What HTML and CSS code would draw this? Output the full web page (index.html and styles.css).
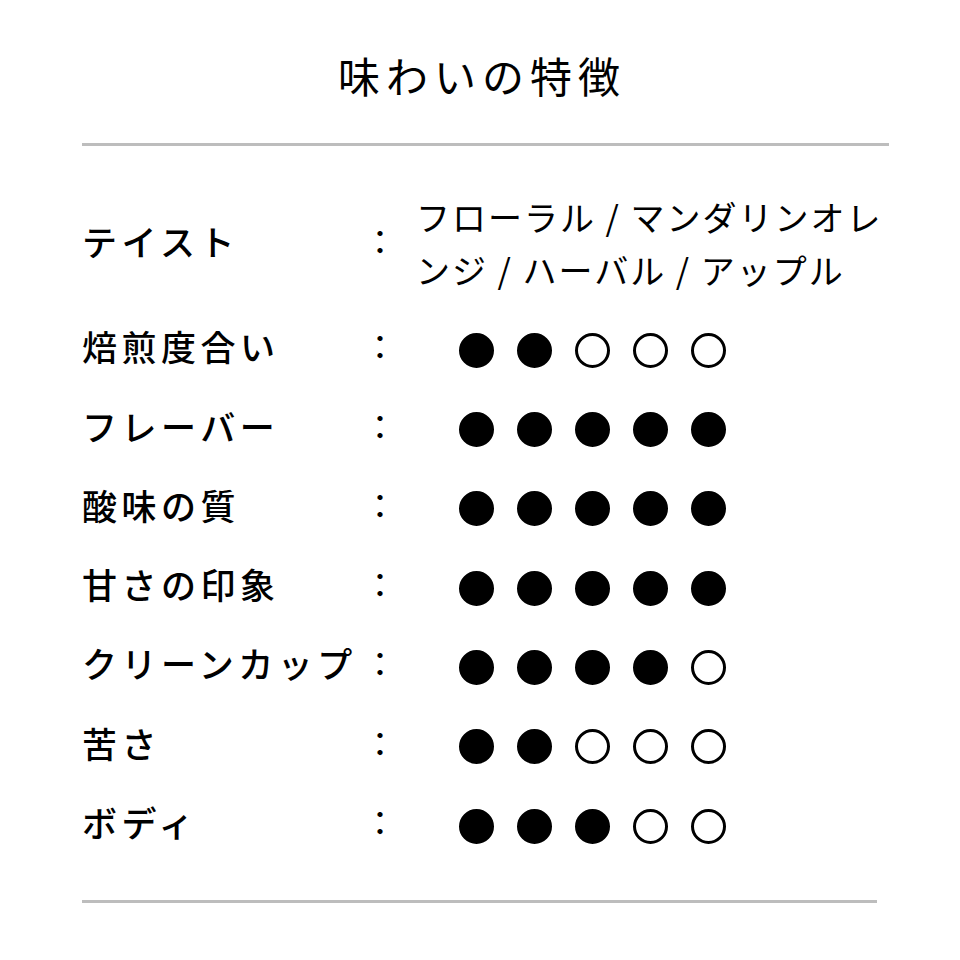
FILE: index.html
```html
<!DOCTYPE html>
<html lang="ja">
<head>
<meta charset="utf-8">
<link rel="stylesheet" href="styles.css">
</head>
<body>
<div class="page">
  <h1 class="title">味わいの特徴</h1>
  <hr class="rule rule-top">
  <div class="table">
    <div class="row row-taste">
      <div class="label">テイスト</div>
      <div class="colon">：</div>
      <div class="value text">フローラル / マンダリンオレンジ / ハーバル / アップル</div>
    </div>
    <div class="row">
      <div class="label">焙煎度合い</div>
      <div class="colon">：</div>
      <div class="value dots"><span class="dot on"></span><span class="dot on"></span><span class="dot"></span><span class="dot"></span><span class="dot"></span></div>
    </div>
    <div class="row">
      <div class="label">フレーバー</div>
      <div class="colon">：</div>
      <div class="value dots"><span class="dot on"></span><span class="dot on"></span><span class="dot on"></span><span class="dot on"></span><span class="dot on"></span></div>
    </div>
    <div class="row">
      <div class="label">酸味の質</div>
      <div class="colon">：</div>
      <div class="value dots"><span class="dot on"></span><span class="dot on"></span><span class="dot on"></span><span class="dot on"></span><span class="dot on"></span></div>
    </div>
    <div class="row">
      <div class="label">甘さの印象</div>
      <div class="colon">：</div>
      <div class="value dots"><span class="dot on"></span><span class="dot on"></span><span class="dot on"></span><span class="dot on"></span><span class="dot on"></span></div>
    </div>
    <div class="row">
      <div class="label">クリーンカップ</div>
      <div class="colon">：</div>
      <div class="value dots"><span class="dot on"></span><span class="dot on"></span><span class="dot on"></span><span class="dot on"></span><span class="dot"></span></div>
    </div>
    <div class="row">
      <div class="label">苦さ</div>
      <div class="colon">：</div>
      <div class="value dots"><span class="dot on"></span><span class="dot on"></span><span class="dot"></span><span class="dot"></span><span class="dot"></span></div>
    </div>
    <div class="row">
      <div class="label">ボディ</div>
      <div class="colon">：</div>
      <div class="value dots"><span class="dot on"></span><span class="dot on"></span><span class="dot on"></span><span class="dot"></span><span class="dot"></span></div>
    </div>
  </div>
  <hr class="rule rule-bottom">
</div>
</body>
</html>
```
FILE: styles.css
```css
html, body {
  margin: 0;
  padding: 0;
  background: #ffffff;
}
body {
  font-family: "Noto Sans CJK JP", "Noto Sans", sans-serif;
  color: #000000;
}
.page {
  width: 960px;
  height: 960px;
  padding: 0 0 0 82px;
  box-sizing: border-box;
}
.title {
  margin: 0;
  padding-top: 49px;
  width: 800px;
  text-align: center;
  font-size: 42px;
  font-weight: 400;
  line-height: 52px;
  letter-spacing: 6px;
  height: 52px;
}
.rule {
  border: 0;
  height: 3px;
  background: #bdbdbd;
  margin: 0;
}
.rule-top {
  width: 807px;
  margin-top: 42px;
}
.rule-bottom {
  width: 795px;
  margin-top: 36px;
}
.table {
  display: flex;
  flex-direction: column;
  padding-top: 31px;
}
.row {
  display: grid;
  grid-template-columns: 281px 34px 1fr;
  align-items: center;
  padding: 13px 0 13.3px;
}
.label {
  font-size: 35px;
  font-weight: 500;
  letter-spacing: 4.5px;
  line-height: 47px;
  margin-bottom: 6px;
  white-space: nowrap;
}
.colon {
  font-size: 34px;
  line-height: 47px;
  margin-bottom: 6px;
  text-align: center;
}
.value {
  padding-left: 19px;
}
.text {
  font-size: 34px;
  font-weight: 400;
  line-height: 53px;
  letter-spacing: 2px;
  width: 474px;
  word-break: break-all;
}
.dots {
  display: flex;
  gap: 23px;
  padding-left: 62px;
  height: 53px;
  align-items: center;
  padding-top: 3px;
  box-sizing: border-box;
}
.dot {
  width: 35px;
  height: 35px;
  border-radius: 50%;
  border: 3px solid #000;
  box-sizing: border-box;
  flex: none;
}
.dot.on {
  background: #000;
}
```
